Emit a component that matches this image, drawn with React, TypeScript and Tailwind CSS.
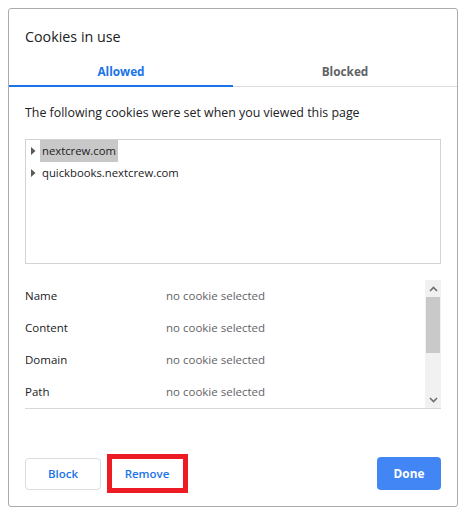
import React from "react";

const FONT = { fontFamily: '"Open Sans", "Noto Sans", Arial, sans-serif' };

const domains = [
  { name: "nextcrew.com", selected: true },
  { name: "quickbooks.nextcrew.com", selected: false },
];

const fields = ["Name", "Content", "Domain", "Path"];

function Caret() {
  return (
    <svg width="5" height="8" viewBox="0 0 5 8" className="shrink-0">
      <path d="M0 0 L4.5 4 L0 8 Z" fill="#5a5a5a" />
    </svg>
  );
}

function Chevron({ up }: { up?: boolean }) {
  return (
    <svg width="9" height="6" viewBox="0 0 9 6">
      <path
        d={up ? "M1 5 L4.5 1.5 L8 5" : "M1 1 L4.5 4.5 L8 1"}
        fill="none"
        stroke="#6e6e6e"
        strokeWidth="1.6"
      />
    </svg>
  );
}

export default function App() {
  return (
    <div className="min-h-screen bg-white p-2" style={FONT}>
      <div className="flex h-[499px] w-[450px] flex-col rounded-[3px] border border-[#ababab] bg-white">
        {/* title */}
        <div className="px-4 pt-4 text-[14.3px] leading-6 text-[#202124]">Cookies in use</div>

        {/* tabs */}
        <div className="flex h-[38px] border-b border-[#dadce0]">
          <div className="relative flex flex-1 items-end justify-center pb-[7px] text-[11.8px] font-bold leading-4 text-[#1a73e8]">
            Allowed
            <span className="absolute -bottom-px left-0 right-0 h-[2px] bg-[#1a73e8]" />
          </div>
          <div className="flex flex-1 items-end justify-center pb-[7px] text-[11.8px] font-bold leading-4 text-[#5f6368]">
            Blocked
          </div>
        </div>

        <div className="flex flex-1 flex-col px-4">
          <p className="mt-[17px] text-[12.4px] leading-[18px] text-[#202124]">
            The following cookies were set when you viewed this page
          </p>

          {/* tree */}
          <div className="mt-[17px] h-[125px] border border-[#d3d3d3] px-[5px]">
            {domains.map((d) => (
              <div key={d.name} className="flex h-[22px] items-center gap-[4px]">
                <Caret />
                <span
                  className={`px-[2px] text-[11.3px] leading-[22px] text-[#202124] ${
                    d.selected ? "bg-[#c8c8c8]" : ""
                  }`}
                >
                  {d.name}
                </span>
              </div>
            ))}
          </div>

          {/* details */}
          <div className="mt-4 flex h-[129px] border-b border-[#d8d8d8]">
            <div className="flex-1">
              {fields.map((f) => (
                <div key={f} className="flex h-8 items-center text-[11.5px]">
                  <span className="w-[141px] text-[#202124]">{f}</span>
                  <span className="text-[#5f6368]">no cookie selected</span>
                </div>
              ))}
            </div>
            <div className="flex w-4 flex-col items-center bg-[#f1f1f1]">
              <div className="flex h-[17px] items-center justify-center">
                <Chevron up />
              </div>
              <div className="h-[56px] w-[14px] bg-[#c9c9c9]" />
              <div className="flex-1" />
              <div className="flex h-[17px] items-center justify-center">
                <Chevron />
              </div>
            </div>
          </div>

          {/* buttons */}
          <div className="mt-auto mb-4 flex items-center">
            <button className="h-8 w-[76px] rounded-[4px] border border-[#dadce0] bg-white text-[11.5px] font-semibold text-[#1a73e8]">
              Block
            </button>
            <div className="relative ml-2">
              <button className="h-8 w-[76px] rounded-[4px] bg-white text-[11.5px] font-semibold text-[#1a73e8]">
                Remove
              </button>
              <span className="pointer-events-none absolute -bottom-[3px] -left-[2px] -right-[3px] -top-[4px] border-[5px] border-[#ed1c24]" />
            </div>
            <button className="ml-auto h-[33px] w-[64px] rounded-[4px] bg-[#4285f4] text-[11.8px] font-bold text-white">
              Done
            </button>
          </div>
        </div>
      </div>
    </div>
  );
}
